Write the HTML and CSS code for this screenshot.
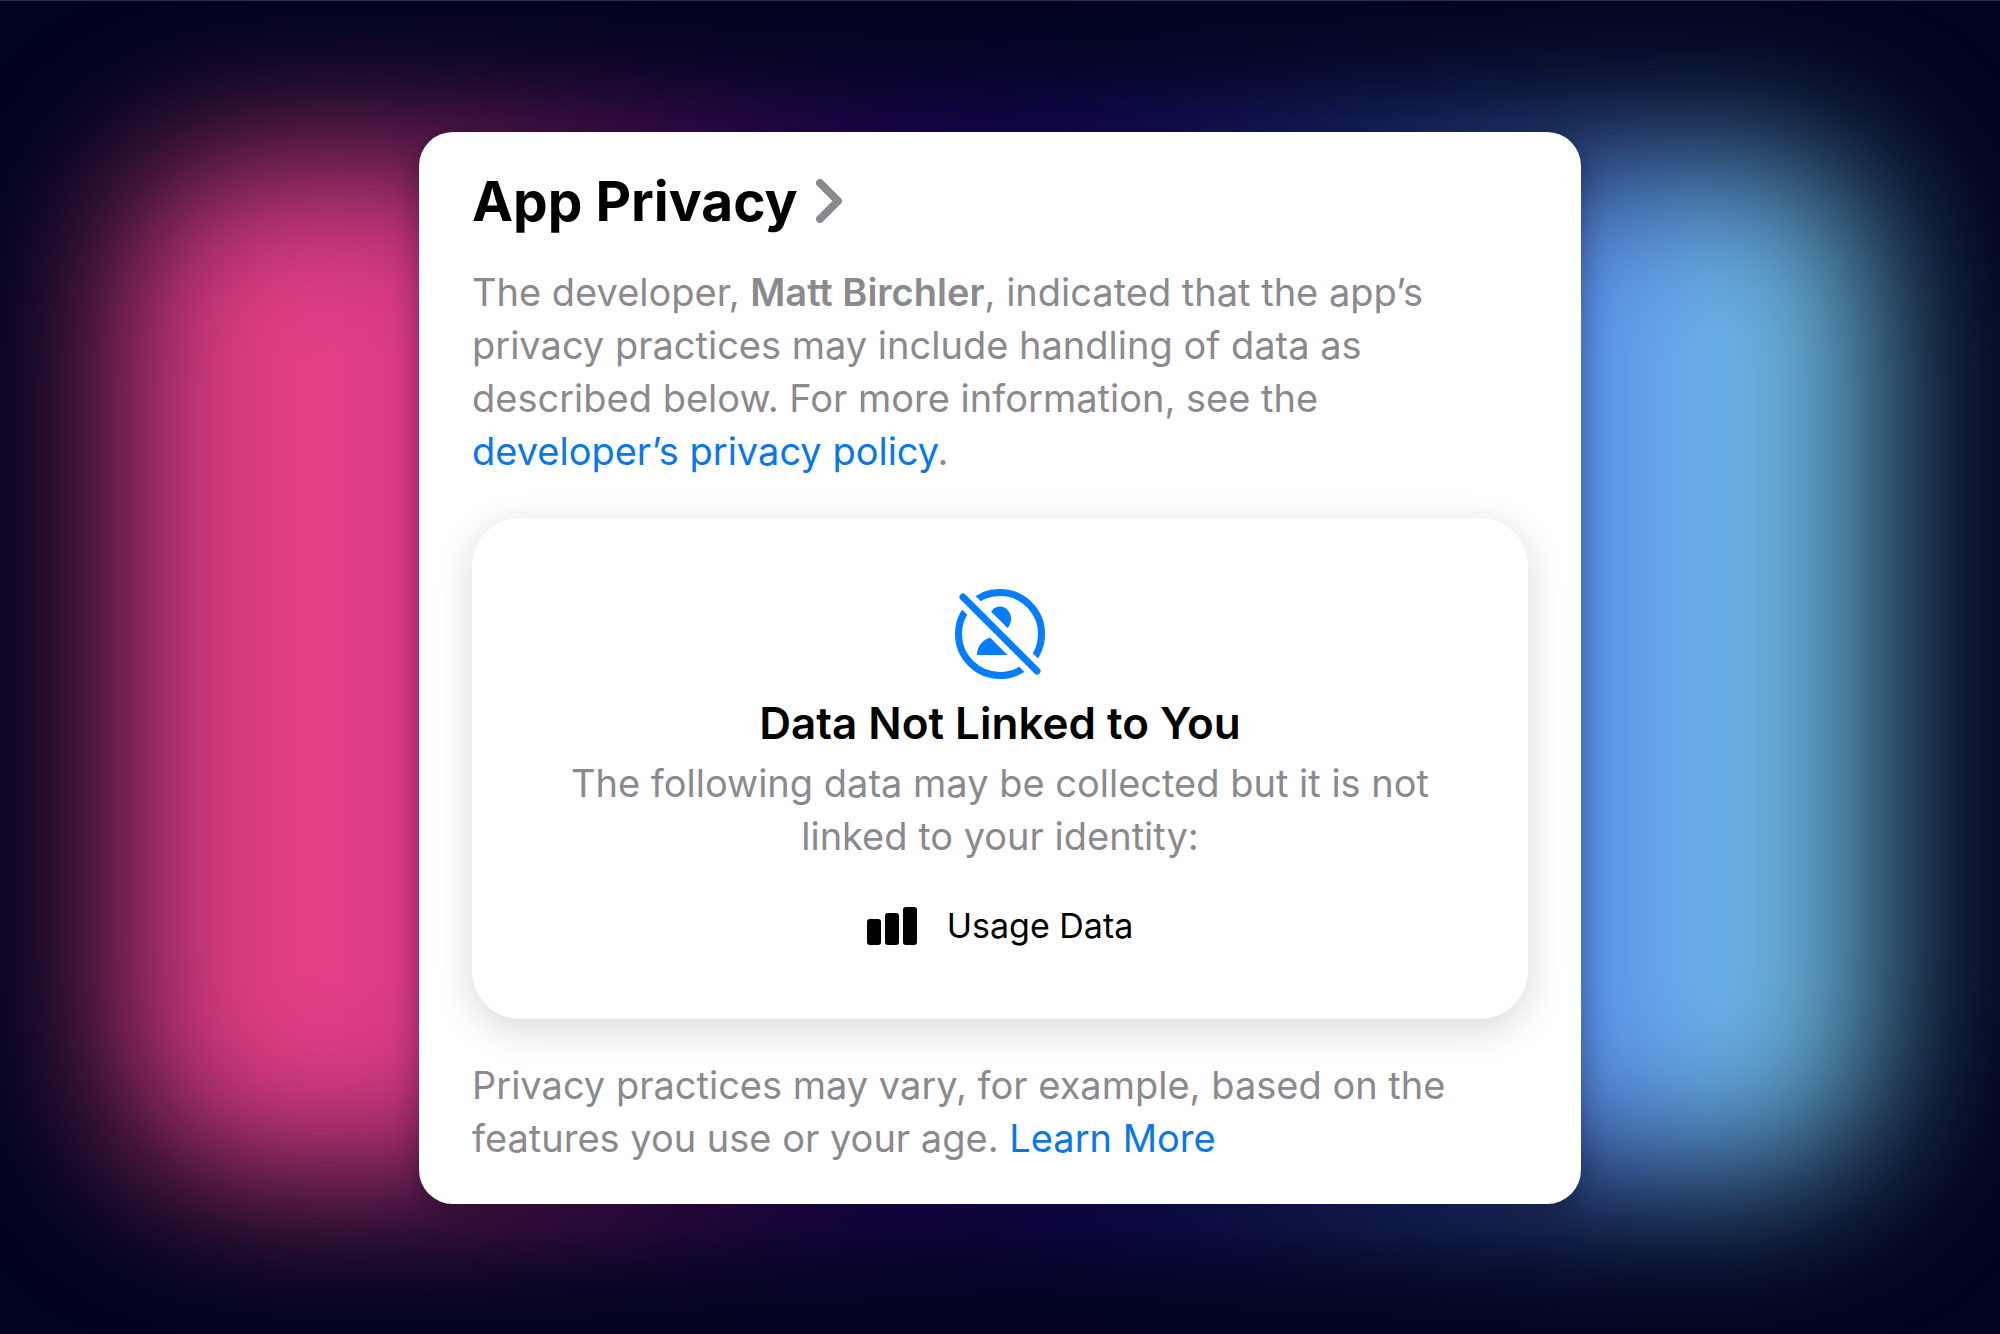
FILE: index.html
```
<!DOCTYPE html>
<html lang="en">
<head>
  <meta charset="UTF-8">
  <meta name="viewport" content="width=device-width, initial-scale=1.0">
  <title>App Privacy</title>
  <link rel="stylesheet" href="styles.css">
</head>
<body>
  <div class="glow"></div>

  <main class="card">
    <h1 class="title">
      App Privacy
      <svg class="chevron" viewBox="0 0 28 44" aria-hidden="true">
        <path d="M4 4 L22 22 L4 40"/>
      </svg>
    </h1>

    <p class="text">The developer, <strong>Matt Birchler</strong>, indicated that the app’s privacy practices may include handling of data as described below. For more information, see the <a href="#">developer’s privacy policy</a>.</p>

    <section class="panel">
      <svg class="unlinked" viewBox="0 0 90 90" aria-hidden="true">
        <defs>
          <mask id="slash">
            <rect width="90" height="90" fill="#fff"/>
            <path d="M-10 -10 L100 100" stroke="#000" stroke-width="19"/>
          </mask>
        </defs>
        <g mask="url(#slash)">
          <circle class="ring" cx="45" cy="45" r="41.500"/>
          <ellipse cx="45" cy="30" rx="11" ry="12.500"/>
          <path d="M22 66 C22 54 32 47 45 47 C58 47 68 54 68 66 Z"/>
        </g>
        <path class="line" d="M8 8 L82 82"/>
      </svg>
      <h2 class="panel-title">Data Not Linked to You</h2>
      <p class="text">The following data may be collected but it is not linked to your identity:</p>
      <div class="data-type">
        <svg class="bars" viewBox="0 0 50 38" aria-hidden="true">
          <rect x="0" y="12" width="14" height="26" rx="3"/>
          <rect x="18" y="6" width="14" height="32" rx="3"/>
          <rect x="36" y="0" width="14" height="38" rx="3"/>
        </svg>
        <span>Usage Data</span>
      </div>
    </section>

    <p class="text">Privacy practices may vary, for example, based on the features you use or your age. <a href="#">Learn More</a></p>
  </main>
</body>
</html>
```
FILE: styles.css
```
:root {
  --bg-color: #01041e;
  --text-color: #8a8a8e;
  --link-color: #0a77e8;
  --icon-color: #067dfb;
}
* {
  box-sizing: border-box;
}
body {
  margin: 0;
  min-height: 100vh;
  display: flex;
  justify-content: center;
  align-items: center;
  position: relative;
  overflow: hidden;
  font-family: Inter, 'Liberation Sans', sans-serif;
  background-color: var(--bg-color);
  border-top: 1px solid #2c2f4a;
}
h1, h2, p {
  margin: 0;
}
/* blurred colour wash behind the card */
.glow {
  position: absolute;
  inset: 12% 6%;
  border-radius: 120px;
  background: linear-gradient(to right, #dc3c7c 0%, #e64086 12%, #dc3c86 18%, #a81c90 27%, #4c0a90 40%, #3408a0 52%, #2c28b0 62%, #4264d0 74%, #5a90e8 84%, #6cb2f2 89%, #6cbce8 94%, #6ab2c0 100%);
  filter: blur(80px);
}
.card {
  position: relative;
  width: 60%;
  max-width: 1162px;
  padding: 39px 53px;
  border-radius: 34px;
  background-color: #fff;
  box-shadow: 0 8px 32px rgba(0, 0, 20, 0.4);
}
.title {
  display: flex;
  align-items: center;
  gap: 18px;
  margin-bottom: 35px;
  font-size: 55px;
  line-height: 60px;
  font-weight: 700;
}
.chevron {
  width: 28px;
  height: 44px;
  fill: none;
  stroke: #8a8a8e;
  stroke-width: 8;
  stroke-linecap: round;
  stroke-linejoin: round;
}
.text {
  font-size: 38px;
  line-height: 53px;
  color: var(--text-color);
}
.text strong {
  font-weight: 600;
}
a {
  color: var(--link-color);
  text-decoration: none;
}
.panel {
  display: flex;
  flex-direction: column;
  align-items: center;
  margin: 40px 0;
  padding: 71px 90px 73px;
  border-radius: 48px;
  text-align: center;
  background-color: #fff;
  box-shadow: 0 10px 40px rgba(0, 0, 0, 0.16);
}
.unlinked {
  width: 90px;
  height: 90px;
  fill: var(--icon-color);
}
.unlinked .ring {
  fill: none;
  stroke: var(--icon-color);
  stroke-width: 7;
}
.unlinked .line {
  stroke: var(--icon-color);
  stroke-width: 7;
  stroke-linecap: round;
}
.panel-title {
  margin: 18px 0 7px;
  font-size: 44px;
  line-height: 53px;
  font-weight: 600;
}
.data-type {
  display: flex;
  align-items: center;
  gap: 30px;
  margin-top: 43px;
  font-size: 34px;
  line-height: 40px;
}
.bars {
  width: 50px;
  height: 38px;
}
```
